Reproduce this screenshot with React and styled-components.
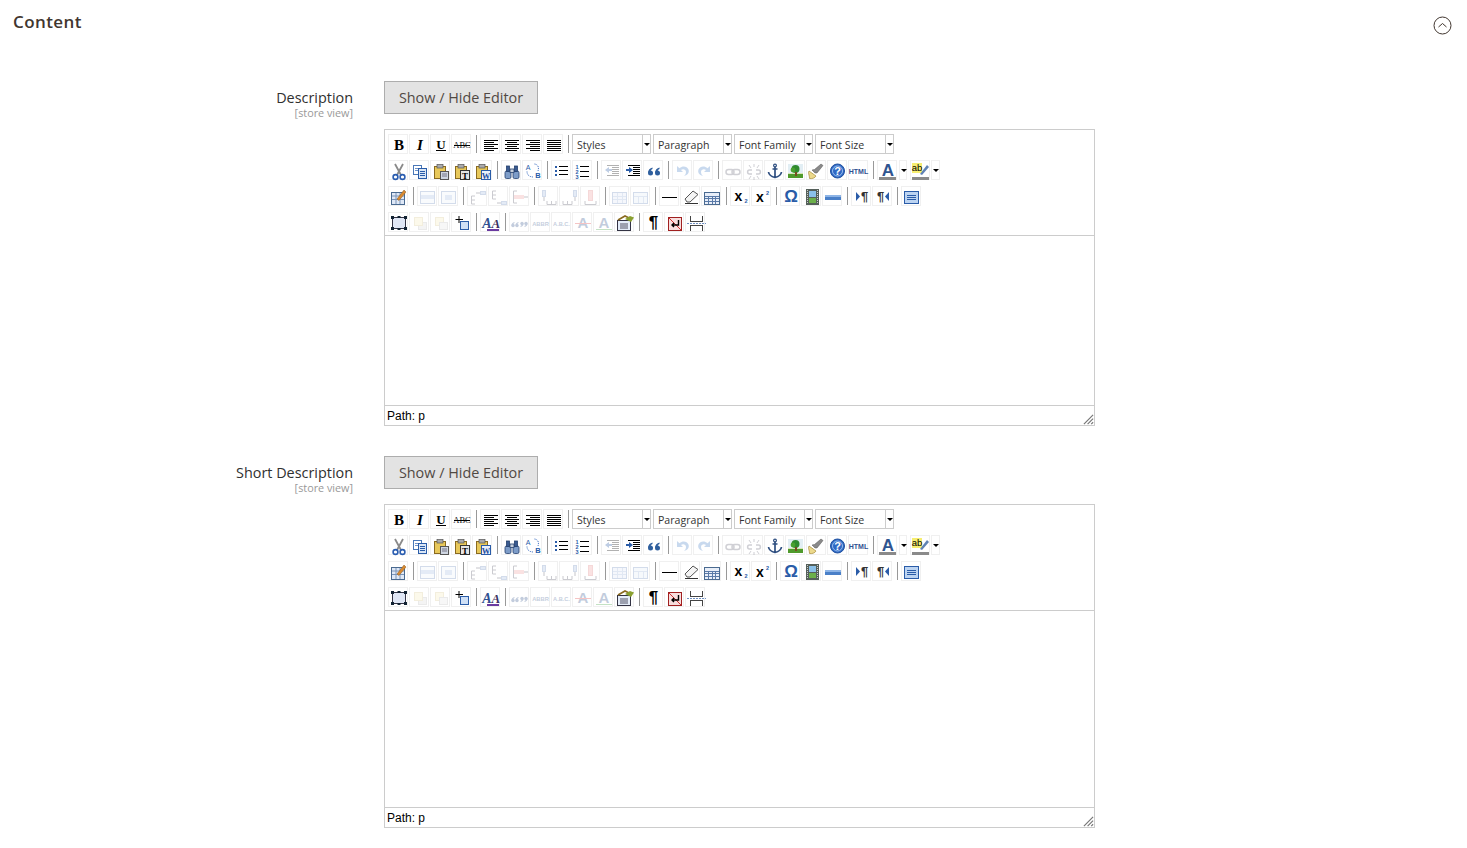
import React from 'react'
import styled, { createGlobalStyle } from 'styled-components'

const GlobalStyle = createGlobalStyle`
    html, body {
        margin: 0;
        padding: 0;
        background: #fff;
        font-family: "Open Sans", "Liberation Sans", sans-serif;
    }
`

const Page = styled.div`
    display: flex;
    flex-direction: column;
    height: 848px;
    overflow: hidden;
`

const SectionHeader = styled.header`
    display: flex;
    flex: none;
    justify-content: space-between;
    align-items: flex-start;
    height: 81px;
    padding: 10px 15px 0 13px;
    box-sizing: border-box;
`

const SectionTitle = styled.h2`
    margin: 0;
    font-size: 17px;
    line-height: 23px;
    font-weight: 600;
    letter-spacing: 0.4px;
    color: #41362f;
`

const CollapseIcon = styled.svg`
    display: block;
    margin-top: 6px;
`

const FieldRow = styled.section`
    display: flex;
    flex: none;
    margin-bottom: 30px;
`

const LabelColumn = styled.div`
    width: 353px;
    padding-top: 7px;
    text-align: right;
    flex: none;
`

const FieldLabel = styled.div`
    font-size: 14.4px;
    line-height: 20px;
    font-weight: 500;
    color: #303030;
`

const Scope = styled.div`
    font-size: 10.8px;
    line-height: 11px;
    margin-top: -1px;
    color: #999;
`

const FieldControl = styled.div`
    margin-left: 31px;
    width: 711px;
`

const ToggleButton = styled.button`
    display: block;
    width: 154px;
    height: 33px;
    padding: 0;
    margin-bottom: 15px;
    border: 1px solid #adadad;
    background: #e3e3e3;
    color: #514943;
    font-family: inherit;
    font-size: 14.4px;
    font-weight: 500;
    cursor: pointer;
`

const EditorFrame = styled.div`
    border: 1px solid #ccc;
    box-sizing: border-box;
    width: 711px;
`

const Toolbar = styled.div`
    display: flex;
    flex-direction: column;
    gap: 6px;
    padding: 4px 3px 3px;
    border-bottom: 1px solid #ccc;
`

const ToolRow = styled.div`
    display: flex;
    gap: 1px;
    height: 20px;
`

const ToolButton = styled.div`
    width: 20px;
    height: 20px;
    box-sizing: border-box;
    border: 1px solid #f0f0f0;
    flex: none;
    svg {
        display: block;
        overflow: visible;
        margin: 2px 0 0 1px;
        opacity: ${({ $off }) => ($off ? 0.3 : 1)};
    }
`

const Divider = styled.div`
    width: 7px;
    flex: none;
    &::before {
        content: '';
        display: block;
        width: 1px;
        height: 18px;
        margin: 1px 0 0 4px;
        background: #999;
    }
`

const SelectBox = styled.div`
    display: flex;
    width: 79px;
    height: 20px;
    box-sizing: border-box;
    border: 1px solid #ccc;
    flex: none;
    margin-right: 1px;
`

const SelectText = styled.div`
    flex: 1;
    padding-left: 4px;
    font-size: 10.6px;
    line-height: 20px;
    color: #333;
`

const SelectArrow = styled.div`
    width: 7px;
    border-left: 1px solid #ccc;
    display: flex;
    align-items: center;
    justify-content: center;
    &::after {
        content: '';
        border: 3px solid transparent;
        border-top: 3px solid #000;
        border-bottom: 0;
    }
`

const ColorArrow = styled.div`
    width: ${({ $wide }) => ($wide ? 9 : 8)}px;
    height: 20px;
    box-sizing: border-box;
    border: 1px solid #f0f0f0;
    margin-right: ${({ $wide }) => ($wide ? 0 : 2)}px;
    margin-left: ${({ $wide }) => ($wide ? 0 : 1)}px;
    padding-left: 1px;
    display: flex;
    align-items: center;
    justify-content: center;
    flex: none;
    &::after {
        content: '';
        border: 3px solid transparent;
        border-top: 3px solid #000;
        border-bottom: 0;
    }
`

const EditArea = styled.div`
    height: ${({ $height }) => $height}px;
    background: #fff;
`

const StatusBar = styled.div`
    display: flex;
    justify-content: space-between;
    height: 20px;
    box-sizing: border-box;
    border-top: 1px solid #ccc;
    font-family: "Liberation Sans", Arial, sans-serif;
    font-size: 12px;
    line-height: 20px;
    padding-left: 2px;
    color: #000;
`

const ResizeGrip = styled.svg`
    display: block;
    align-self: flex-end;
`

const Lines = ({ rows, color = '#000' }) => (
    <path d={rows.map(([y, a, b]) => `M${a} ${y + 0.5}H${b}`).join('')} stroke={color} fill="none" shapeRendering="crispEdges" />
)

const Letter = ({ x = 9, y = 13, size = 14, font = 'Liberation Serif', weight = 700, style = 'normal', fill = '#000', children }) => (
    <text x={x} y={y} fontFamily={`"${font}", serif`} fontSize={size} fontWeight={weight} fontStyle={style} fill={fill} textAnchor="middle">{children}</text>
)

const Clip = ({ children }) => (
    <>
        <rect x="2.5" y="3.5" width="11" height="12" fill="#e8c85a" stroke="#8a6a20" />
        <rect x="5" y="1.5" width="6" height="3.5" fill="#aaa" stroke="#555" strokeWidth=".7" />
        {children}
    </>
)

const QuoteMark = ({ x, flip }) => (
    <g transform={flip ? `rotate(180 ${x + 1.5} 9.5)` : undefined}>
        <circle cx={x + 1.5} cy="10.5" r="1.7" />
        <path d={`M${x} 10.5C${x} 8.5 ${x + 1} 7.5 ${x + 3} 7V8C${x + 2} 8.5 ${x + 1.5} 9 ${x + 1.5} 10Z`} />
    </g>
)

const icons = {
    bold: <Letter size={15} y={13}>B</Letter>,
    italic: <Letter size={15} y={13} style="italic">I</Letter>,
    underline: <><Letter size={13} y={11.5}>U</Letter><path d="M4 13.5H14" stroke="#000" /></>,
    strike: <><Letter size={8.5} y={11} font="Liberation Serif" weight={400} fill="#111">ABC</Letter><path d="M1 8.5H17" stroke="#000" /></>,
    alignLeft: <Lines rows={[[3, 2, 16], [5, 2, 12], [7, 2, 16], [9, 2, 12], [11, 2, 16], [13, 2, 12]]} />,
    alignCenter: <Lines rows={[[3, 2, 16], [5, 4, 14], [7, 2, 16], [9, 4, 14], [11, 2, 16], [13, 4, 14]]} />,
    alignRight: <Lines rows={[[3, 2, 16], [5, 6, 16], [7, 2, 16], [9, 6, 16], [11, 2, 16], [13, 6, 16]]} />,
    alignFull: <Lines rows={[[3, 2, 16], [5, 2, 16], [7, 2, 16], [9, 2, 16], [11, 2, 16], [13, 2, 16]]} />,
    cut: (
        <>
            <path d="M5 1L11 12M13 1L7 12" stroke="#8a8a8a" strokeWidth="1.8" />
            <circle cx="5.5" cy="14" r="2.4" fill="none" stroke="#2a5db0" strokeWidth="1.6" />
            <circle cx="12.5" cy="14" r="2.4" fill="none" stroke="#2a5db0" strokeWidth="1.6" />
        </>
    ),
    copy: (
        <g shapeRendering="crispEdges">
            <rect x="2.5" y="2.5" width="8" height="9" fill="#fff" stroke="#4a78b8" />
            <path d="M4 5H9M4 7H9" stroke="#6f93c8" />
            <rect x="7.5" y="5.5" width="8" height="10" fill="#dbe7f6" stroke="#2a5ca8" />
            <path d="M9 8H14M9 10H14M9 12H14" stroke="#2a5ca8" />
        </g>
    ),
    paste: <Clip><rect x="8.5" y="8.5" width="8" height="8" fill="#cfd6e2" stroke="#555" /><path d="M10 11H15M10 13H15" stroke="#778" /></Clip>,
    pasteText: <Clip><rect x="7.5" y="7.5" width="9" height="9" fill="#e6e6e6" stroke="#333" /><Letter x={12} y={15.5} size={9}>T</Letter></Clip>,
    pasteWord: <Clip><rect x="7.5" y="7.5" width="9" height="9" fill="#eaf0fa" stroke="#2a5ca8" /><Letter x={12} y={15.5} size={8.5} fill="#1e4fa0">W</Letter></Clip>,
    search: (
        <g stroke="#24406e" strokeWidth=".8">
            <rect x="2" y="8" width="6" height="7.5" rx="1.5" fill="#7d9cc8" />
            <rect x="10" y="8" width="6" height="7.5" rx="1.5" fill="#7d9cc8" />
            <rect x="3.5" y="3" width="3" height="5.5" fill="#3a5a90" />
            <rect x="11.5" y="3" width="3" height="5.5" fill="#3a5a90" />
            <rect x="7" y="6" width="4" height="3.5" fill="#c6cfdc" />
        </g>
    ),
    replace: (
        <>
            <Letter x={4} y={7} size={7} font="Liberation Sans" weight={400} fill="#2a5ca8">A</Letter>
            <Letter x={14} y={15} size={7.5} font="Liberation Sans" weight={700} fill="#2a5ca8">B</Letter>
            <path d="M10.5 1C14.5 1.5 15 5 14 8M3 8.5C3 12 5.5 14 9.5 14" fill="none" stroke="#3a6cc0" strokeDasharray="1 1" />
        </>
    ),
    bullets: (
        <>
            <rect x="2" y="3" width="2" height="2" fill="#2a5ca8" />
            <rect x="2" y="7" width="2" height="2" fill="#2a5ca8" />
            <rect x="2" y="11" width="2" height="2" fill="#2a5ca8" />
            <Lines rows={[[3, 6, 15], [7, 6, 15], [11, 6, 15]]} />
        </>
    ),
    numbers: (
        <>
            <Letter x={3} y={6} size={5.5} font="Liberation Sans" fill="#2a5ca8">1</Letter>
            <Letter x={3} y={11} size={5.5} font="Liberation Sans" fill="#2a5ca8">2</Letter>
            <Letter x={3} y={16} size={5.5} font="Liberation Sans" fill="#2a5ca8">3</Letter>
            <Lines rows={[[3, 6, 15], [8, 6, 15], [13, 6, 15]]} />
        </>
    ),
    outdent: (
        <>
            <Lines rows={[[2, 4, 16], [4, 9, 16], [6, 9, 16], [8, 9, 16], [10, 9, 16], [12, 4, 16]]} />
            <path d="M2 7L6 4V6H9V8H6V10Z" fill="#2a5ca8" />
        </>
    ),
    indent: (
        <>
            <Lines rows={[[2, 4, 16], [4, 9, 16], [6, 9, 16], [8, 9, 16], [10, 9, 16], [12, 4, 16]]} />
            <path d="M9 7L5 4V6H2V8H5V10Z" fill="#2a5ca8" />
        </>
    ),
    quote: (
        <g fill="#2f5f9e">
            <circle cx="5.5" cy="10" r="2.5" />
            <path d="M3 10C3 7 5 5 7.5 4.5V6C6 6.5 5.5 8 5.5 9Z" />
            <circle cx="12.5" cy="10" r="2.5" />
            <path d="M10 10C10 7 12 5 14.5 4.5V6C13 6.5 12.5 8 12.5 9Z" />
        </g>
    ),
    undo: <path d="M3 3V9H9L7 7C9 5.5 12 6.5 12 9C12 11 11 12 10 13C14 12 15.5 9.5 14.5 6.5C13 3 8.5 2.5 5.5 5.2Z" fill="#4a80c8" />,
    redo: <path d="M15 3V9H9L11 7C9 5.5 6 6.5 6 9C6 11 7 12 8 13C4 12 2.5 9.5 3.5 6.5C5 3 9.5 2.5 12.5 5.2Z" fill="#4a80c8" />,
    link: (
        <g fill="none" stroke="#667" strokeWidth="1.5">
            <rect x="2" y="6.5" width="8" height="5" rx="2.5" />
            <rect x="8" y="6.5" width="8" height="5" rx="2.5" />
        </g>
    ),
    unlink: (
        <g fill="none" stroke="#667" strokeWidth="1.5">
            <path d="M7 7H4.5C2 7 2 11 4.5 11H7" />
            <path d="M11 7H13.5C16 7 16 11 13.5 11H11" />
            <path d="M9 1V4M9 14V17M4 2L6 5M14 2L12 5M4 16L6 13M14 16L12 13" strokeWidth="1" />
        </g>
    ),
    anchor: (
        <g fill="none" stroke="#2f4f80" strokeWidth="1.7">
            <circle cx="9" cy="2.5" r="1.4" strokeWidth="1.2" />
            <path d="M9 4V14M6.5 6H11.5M2.5 9C3 13 7 14 9 14.5C11 14 15 13 15.5 9" />
        </g>
    ),
    image: (
        <g shapeRendering="crispEdges">
            <rect x="1" y="1" width="15" height="14" fill="#d6e6b4" />
            <rect x="1" y="1" width="15" height="9" fill="#e2eef4" />
            <rect x="1" y="11" width="15" height="4" fill="#4f9a2c" />
            <circle cx="8.5" cy="6" r="4" fill="#2f8a2f" shapeRendering="auto" />
            <circle cx="6" cy="7" r="2.4" fill="#4aa02f" shapeRendering="auto" />
            <rect x="8" y="9" width="2" height="4" fill="#7a4a20" />
        </g>
    ),
    cleanup: (
        <>
            <path d="M1 8L8 13C7 15 4 16 1.5 15.5C1.5 13 .5 11 .5 9.5Z" fill="#ecd98c" stroke="#a58a3a" strokeWidth=".7" />
            <path d="M4 7L7 10L9 10L15 2.5L13 1L6.5 6.5Z" fill="#8a8a8a" stroke="#555" strokeWidth=".5" />
        </>
    ),
    help: (
        <>
            <circle cx="8.5" cy="8" r="7" fill="#2f68c4" stroke="#1e4f9e" />
            <circle cx="8.5" cy="8" r="5" fill="none" stroke="#9cc0ee" />
            <Letter x={8.5} y={12} size={11} font="Liberation Sans" fill="#fff">?</Letter>
        </>
    ),
    html: <Letter x={8.5} y={10.5} size={7} font="Liberation Sans" fill="#2f4f90">HTML</Letter>,
    foreColor: (
        <>
            <Letter x={9} y={13} size={17} font="Liberation Sans" fill="#2f5590">A</Letter>
            <rect x="0" y="14" width="17" height="3" fill="#8a8a8a" />
        </>
    ),
    backColor: (
        <>
            <rect x="0" y="0" width="10" height="10" fill="#f6ee70" />
            <Letter x={5} y={7.5} size={9.5} font="Liberation Sans" weight={400}>ab</Letter>
            <path d="M8 11L15 2L17 4L10 12Z" fill="#5f82b4" />
            <rect x="0" y="14" width="17" height="3" fill="#8a8a8a" />
        </>
    ),
    tableProps: (
        <>
            <rect x="1.5" y="3.5" width="13" height="12" fill="#dfe8f6" stroke="#4a6a90" />
            <path d="M2 7H14M2 10.5H14M6 4V15M10 4V15" stroke="#7a94b8" />
            <path d="M7 10L14 1L16 3L9 11.5Z" fill="#d98a30" stroke="#8a5a20" strokeWidth=".5" />
        </>
    ),
    rowProps: (
        <>
            <rect x="1.5" y="2.5" width="14" height="12" fill="#eef3fb" stroke="#6f8fc0" />
            <rect x="2" y="6" width="13" height="4" fill="#a8c0e4" />
        </>
    ),
    cellProps: (
        <>
            <rect x="1.5" y="2.5" width="14" height="12" fill="#eef3fb" stroke="#6f8fc0" />
            <rect x="5" y="6" width="7" height="5" fill="#a8c0e4" />
        </>
    ),
    rowBefore: (
        <>
            <path d="M2.5 7V15M2.5 7H6M2.5 11H6M2.5 15H6" fill="none" stroke="#556" />
            <rect x="11.5" y="2.5" width="5" height="3" fill="#a8c0e4" stroke="#6f8fc0" />
            <path d="M11 4H7" stroke="#445" />
        </>
    ),
    rowAfter: (
        <>
            <path d="M2.5 2V10M2.5 2H6M2.5 6H6M2.5 10H6" fill="none" stroke="#556" />
            <rect x="11.5" y="12.5" width="5" height="3" fill="#a8c0e4" stroke="#6f8fc0" />
            <path d="M11 14H7" stroke="#445" />
        </>
    ),
    rowDelete: (
        <>
            <path d="M2.5 2V14M2.5 2H6M2.5 14H6" fill="none" stroke="#556" />
            <rect x="3" y="6" width="10" height="4" fill="#f0a0a0" />
            <path d="M13 8H17" stroke="#445" />
        </>
    ),
    colBefore: (
        <>
            <path d="M7 15.5H16M7 15.5V12M11.5 15.5V12M16 15.5V12" fill="none" stroke="#556" />
            <rect x="2.5" y="1.5" width="3" height="6" fill="#a8c0e4" stroke="#6f8fc0" />
            <path d="M4 8V12" stroke="#445" />
        </>
    ),
    colAfter: (
        <>
            <path d="M2 15.5H11M2 15.5V12M6.5 15.5V12M11 15.5V12" fill="none" stroke="#556" />
            <rect x="12.5" y="1.5" width="3" height="6" fill="#a8c0e4" stroke="#6f8fc0" />
            <path d="M14 8V12" stroke="#445" />
        </>
    ),
    colDelete: (
        <>
            <path d="M3 15.5H14M3 15.5V12M14 15.5V12" fill="none" stroke="#556" />
            <rect x="6.5" y="1.5" width="4" height="10" fill="#f0a0a0" stroke="#e08080" />
        </>
    ),
    split: (
        <g shapeRendering="crispEdges">
            <rect x="1.5" y="3.5" width="14" height="11" fill="#dfe8f6" stroke="#6f8fc0" />
            <path d="M2 7H15M2 10.5H15M6 4V14M11 4V14" stroke="#9db4d8" />
        </g>
    ),
    merge: (
        <g shapeRendering="crispEdges">
            <rect x="1.5" y="3.5" width="14" height="11" fill="#e4ecf8" stroke="#6f8fc0" />
            <path d="M2 7H15M6 7V14M11 7V14" stroke="#9db4d8" />
        </g>
    ),
    hr: <path d="M1 8.5H16" stroke="#000" shapeRendering="crispEdges" />,
    eraser: (
        <>
            <path d="M3 10L11 2L16 5.5L8 13H5Z" fill="#f4f4f4" stroke="#555" />
            <path d="M3 14.5H16" stroke="#333" />
        </>
    ),
    visualAid: (
        <g shapeRendering="crispEdges">
            <rect x="1.5" y="3.5" width="15" height="12" fill="#e8eef8" stroke="#4a6a90" />
            <path d="M2 7H16M2 9.5H16M2 12.5H16M5.5 7V15M9 7V15M12.5 7V15" stroke="#5a7aa8" />
        </g>
    ),
    sub: (
        <>
            <Letter x={6.5} y={12} size={14} font="Liberation Sans">x</Letter>
            <Letter x={14} y={14} size={5.5} font="Liberation Sans" fill="#2a5ca8">2</Letter>
        </>
    ),
    sup: (
        <>
            <Letter x={7} y={13} size={14} font="Liberation Sans">x</Letter>
            <Letter x={14.5} y={6} size={5.5} font="Liberation Sans" fill="#2a5ca8">2</Letter>
        </>
    ),
    charmap: <Letter x={9} y={13} size={17} font="Liberation Sans" fill="#2a5ca8">Ω</Letter>,
    media: (
        <g shapeRendering="crispEdges">
            <rect x="3" y="0" width="13" height="16" fill="#55605a" />
            <rect x="6" y="2" width="7" height="6" fill="#8ac0e8" />
            <rect x="6" y="9" width="7" height="5" fill="#6cb04a" />
            <path d="M4.5 1V15M14.5 1V15" stroke="#ccc" strokeDasharray="1 1" />
        </g>
    ),
    advHr: (
        <>
            <rect x="1" y="6" width="16" height="5" fill="#4a80c8" />
            <rect x="1" y="6" width="16" height="2" fill="#8db4e6" />
        </>
    ),
    ltr: (
        <>
            <path d="M3 3L7 7.5L3 12Z" fill="#2a5ca8" />
            <Letter x={11.5} y={12} size={13} font="Liberation Sans" fill="#333">¶</Letter>
        </>
    ),
    rtl: (
        <>
            <Letter x={6.5} y={12} size={13} font="Liberation Sans" fill="#333">¶</Letter>
            <path d="M15 3L11 7.5L15 12Z" fill="#2a5ca8" />
        </>
    ),
    fullscreen: (
        <g shapeRendering="crispEdges">
            <rect x="1.5" y="2.5" width="14" height="12" rx="1" fill="#bcd4f2" stroke="#2a5ca8" />
            <path d="M4 6H13M4 8H13M4 10H13" stroke="#2a5ca8" />
        </g>
    ),
    layer: (
        <>
            <rect x="2.5" y="2.5" width="13" height="11" fill="#dfe6f5" stroke="#334" />
            <path d="M1 1h3v3h-3zM14 1h3v3h-3zM1 12h3v3h-3zM14 12h3v3h-3zM7.5 1h3v2h-3zM7.5 13h3v2h-3z" fill="#123" />
        </>
    ),
    forward: (
        <>
            <rect x="7.5" y="7.5" width="8" height="7" fill="#ddd" stroke="#bbb" />
            <rect x="3.5" y="2.5" width="8" height="8" fill="#f8ecc0" stroke="#d8c890" />
        </>
    ),
    backward: (
        <>
            <rect x="3.5" y="2.5" width="8" height="8" fill="#f8ecc0" stroke="#d8c890" />
            <rect x="7.5" y="7.5" width="8" height="7" fill="#e8e8e8" stroke="#bbb" />
        </>
    ),
    absolute: (
        <>
            <path d="M6 1V8M2.5 4.5H10" stroke="#000" />
            <rect x="7.5" y="6.5" width="8" height="8" fill="#cfe0f6" stroke="#2a5ca8" />
        </>
    ),
    styleProps: (
        <>
            <Letter x={4.8} y={13} size={14} style="italic" fill="#2f4f90">A</Letter>
            <Letter x={13.8} y={13} size={13} style="italic" fill="#3a2f60">A</Letter>
            <rect x="5" y="14" width="12" height="2" fill="#6a3aa0" />
        </>
    ),
    cite: (
        <g fill="#3a5a90">
            <QuoteMark x={0.5} />
            <QuoteMark x={4.5} />
            <QuoteMark x={9.5} flip />
            <QuoteMark x={13.5} flip />
        </g>
    ),
    abbr: <Letter x={8.5} y={10.5} size={5.8} font="Liberation Sans" fill="#3a5a90">ABBR</Letter>,
    acronym: <Letter x={8.5} y={10.5} size={5.6} font="Liberation Sans" fill="#3a5a90">A.B.C.</Letter>,
    del: (
        <>
            <Letter x={9} y={13} size={15} font="Liberation Sans" fill="#3a5a90">A</Letter>
            <path d="M1 8.5H17" stroke="#e04040" />
        </>
    ),
    ins: (
        <>
            <Letter x={9} y={13} size={15} font="Liberation Sans" fill="#3a5a90">A</Letter>
            <path d="M1 14.5H17" stroke="#40a040" />
        </>
    ),
    attribs: (
        <>
            <rect x="1.5" y="5.5" width="13" height="10" fill="#e4ecf8" stroke="#334" />
            <path d="M2 5L9 1L15 4" fill="none" stroke="#8a6a20" strokeWidth="1.6" />
            <path d="M9 4L14 1L18 2.5L15 7Z" fill="#8aa030" />
            <path d="M4 9H12M4 11H12M4 13H12" stroke="#556" />
        </>
    ),
    visualChars: <Letter x={8.5} y={13} size={17} font="Liberation Sans">¶</Letter>,
    nonBreaking: (
        <>
            <rect x="2.5" y="2.5" width="13" height="13" fill="#f8dede" stroke="#a02020" />
            <path d="M3 3L15 15" stroke="#d03030" />
            <path d="M12.5 5V10H6M8 8L6 10L8 12" fill="none" stroke="#000" strokeWidth="1.4" />
        </>
    ),
    pageBreak: (
        <>
            <path d="M3.5 1V6.5H15.5V1M3.5 16V10.5H15.5V16" fill="none" stroke="#444" shapeRendering="crispEdges" />
            <path d="M0 8.5H19" stroke="#6f8fc0" strokeDasharray="2 1" shapeRendering="crispEdges" />
        </>
    ),
}

const disabled = ['outdent', 'undo', 'redo', 'link', 'unlink', 'rowProps', 'cellProps', 'rowBefore', 'rowAfter', 'rowDelete', 'colBefore', 'colAfter', 'colDelete', 'split', 'merge', 'forward', 'backward', 'cite', 'abbr', 'acronym', 'del', 'ins']

const toolRows = [
    ['bold', 'italic', 'underline', 'strike', '|', 'alignLeft', 'alignCenter', 'alignRight', 'alignFull', '|', 'sel:Styles', 'sel:Paragraph', 'sel:Font Family', 'sel:Font Size'],
    ['cut', 'copy', 'paste', 'pasteText', 'pasteWord', '|', 'search', 'replace', '|', 'bullets', 'numbers', '|', 'outdent', 'indent', 'quote', '|', 'undo', 'redo', '|', 'link', 'unlink', 'anchor', 'image', 'cleanup', 'help', 'html', '|', 'foreColor', 'arrow', 'backColor', 'arrowWide'],
    ['tableProps', '|', 'rowProps', 'cellProps', '|', 'rowBefore', 'rowAfter', 'rowDelete', '|', 'colBefore', 'colAfter', 'colDelete', '|', 'split', 'merge', '|', 'hr', 'eraser', 'visualAid', '|', 'sub', 'sup', '|', 'charmap', 'media', 'advHr', '|', 'ltr', 'rtl', '|', 'fullscreen'],
    ['layer', 'forward', 'backward', 'absolute', '|', 'styleProps', '|', 'cite', 'abbr', 'acronym', 'del', 'ins', 'attribs', '|', 'visualChars', 'nonBreaking', 'pageBreak'],
]

const Tool = ({ name }) => {
    if (name === '|') return <Divider />
    if (name === 'arrow') return <ColorArrow />
    if (name === 'arrowWide') return <ColorArrow $wide />
    if (name.startsWith('sel:')) {
        return (
            <SelectBox>
                <SelectText>{name.slice(4)}</SelectText>
                <SelectArrow />
            </SelectBox>
        )
    }
    return (
        <ToolButton $off={disabled.includes(name)}>
            <svg width="18" height="18" viewBox="0 0 18 18">{icons[name]}</svg>
        </ToolButton>
    )
}

const Editor = ({ height }) => (
    <EditorFrame>
        <Toolbar>
            {toolRows.map((row, i) => (
                <ToolRow key={i}>
                    {row.map((name, j) => <Tool key={j} name={name} />)}
                </ToolRow>
            ))}
        </Toolbar>
        <EditArea $height={height} />
        <StatusBar>
            <span>Path: p</span>
            <ResizeGrip width="11" height="11" viewBox="0 0 12 12">
                <path d="M1 11L11 1M5 11L11 5M9 11L11 9" stroke="#777" strokeWidth="1.3" fill="none" />
            </ResizeGrip>
        </StatusBar>
    </EditorFrame>
)

const Field = ({ label, height }) => (
    <FieldRow>
        <LabelColumn>
            <FieldLabel>{label}</FieldLabel>
            <Scope>[store view]</Scope>
        </LabelColumn>
        <FieldControl>
            <ToggleButton>Show / Hide Editor</ToggleButton>
            <Editor height={height} />
        </FieldControl>
    </FieldRow>
)

export default function App() {
    return (
        <Page>
            <GlobalStyle />
            <SectionHeader>
                <SectionTitle>Content</SectionTitle>
                <CollapseIcon width="19" height="19" viewBox="0 0 19 19">
                    <circle cx="9.5" cy="9.5" r="8.5" fill="none" stroke="#41362f" />
                    <path d="M5.5 11L9.5 7.5L13.5 11" fill="none" stroke="#41362f" />
                </CollapseIcon>
            </SectionHeader>
            <Field label="Description" height={169} />
            <Field label="Short Description" height={196} />
        </Page>
    )
}
